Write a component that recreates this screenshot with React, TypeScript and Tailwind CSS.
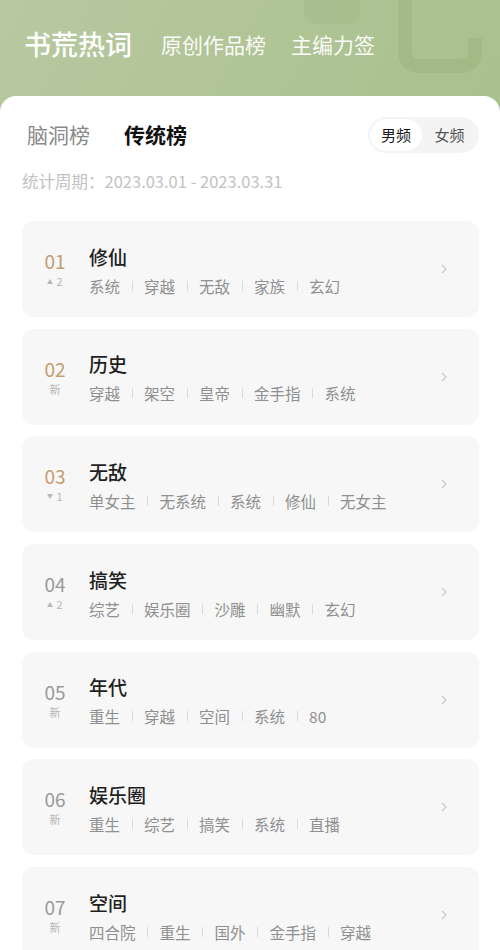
import React from 'react';

type Item = {
  rank: string;
  change: { kind: 'up' | 'down' | 'new'; n?: number };
  title: string;
  tags: string[];
};

const items: Item[] = [
  { rank: '01', change: { kind: 'up', n: 2 }, title: '修仙', tags: ['系统', '穿越', '无敌', '家族', '玄幻'] },
  { rank: '02', change: { kind: 'new' }, title: '历史', tags: ['穿越', '架空', '皇帝', '金手指', '系统'] },
  { rank: '03', change: { kind: 'down', n: 1 }, title: '无敌', tags: ['单女主', '无系统', '系统', '修仙', '无女主'] },
  { rank: '04', change: { kind: 'up', n: 2 }, title: '搞笑', tags: ['综艺', '娱乐圈', '沙雕', '幽默', '玄幻'] },
  { rank: '05', change: { kind: 'new' }, title: '年代', tags: ['重生', '穿越', '空间', '系统', '80'] },
  { rank: '06', change: { kind: 'new' }, title: '娱乐圈', tags: ['重生', '综艺', '搞笑', '系统', '直播'] },
  { rank: '07', change: { kind: 'new' }, title: '空间', tags: ['四合院', '重生', '国外', '金手指', '穿越'] },
];

function Change({ c }: { c: Item['change'] }) {
  if (c.kind === 'new') return <span>新</span>;
  return (
    <span className="flex items-center gap-[3px]">
      <svg width="6" height="5" viewBox="0 0 6 5">
        {c.kind === 'up' ? <path d="M3 0 L6 5 L0 5 Z" fill="#b8b8b8" /> : <path d="M0 0 L6 0 L3 5 Z" fill="#b8b8b8" />}
      </svg>
      <span>{c.n}</span>
    </span>
  );
}

function Row({ item, index }: { item: Item; index: number }) {
  const top = index < 3;
  return (
    <div className="flex items-center h-[96px] rounded-[12px] bg-[#f7f7f7] pl-[12px] pr-[32px]">
      <div className="w-[42px] flex flex-col items-center">
        <span className={`text-[19px] leading-[22px] ${top ? 'text-[#c39d70]' : 'text-[#9a9a9a]'}`}>{item.rank}</span>
        <span className="mt-[2px] text-[11px] leading-[14px] text-[#b5b5b5]">
          <Change c={item.change} />
        </span>
      </div>
      <div className="ml-[13px] flex-1 flex flex-col pt-[2px]">
        <span className="text-[19px] leading-[24px] text-[#1f1f1f] font-medium">{item.title}</span>
        <div className="mt-[7px] flex items-center text-[15.5px] leading-[20px] text-[#8f8f8f]">
          {item.tags.map((t, i) => (
            <React.Fragment key={i}>
              {i > 0 && <span className="mx-[11.5px] w-px h-[10px] bg-[#d9d9d9]" />}
              <span>{t}</span>
            </React.Fragment>
          ))}
        </div>
      </div>
      <svg width="6" height="10" viewBox="0 0 6 10">
        <path d="M1 1 L5 5 L1 9" fill="none" stroke="#c8c8c8" strokeWidth="1.2" />
      </svg>
    </div>
  );
}

export default function App() {
  return (
    <div
      className="w-[500px] h-[950px] overflow-hidden bg-gradient-to-br from-[#b7c9a0] via-[#abc18f] to-[#a6bd88]"
      style={{ fontFamily: '"Noto Sans CJK SC", "Noto Sans", sans-serif' }}
    >
      <div className="relative h-[96px] flex items-center pl-[24px] pb-[8px]">
        <svg className="absolute right-0 top-0" width="200" height="80" viewBox="0 0 200 80">
          <rect x="4" y="-10" width="56" height="34" rx="10" fill="#9cb380" fillOpacity="0.3" />
          <path d="M105 0 L105 52 Q105 66 120 66 L160 66 Q175 66 175 50 L175 38" fill="none" stroke="#9ab27e" strokeOpacity="0.45" strokeWidth="14" strokeLinejoin="round" />
        </svg>
        <span className="relative text-[27px] leading-[34px] font-medium text-white">书荒热词</span>
        <span className="relative ml-[29px] text-[21px] leading-[28px] text-white/95">原创作品榜</span>
        <span className="relative ml-[25px] text-[21px] leading-[28px] text-white/95">主编力签</span>
      </div>
      <div className="bg-white rounded-t-[16px] px-[22px] pr-[21px] pt-[20px] h-full">
        <div className="flex items-center h-[38px]">
          <span className="ml-[5px] text-[21px] text-[#8a8a8a]">脑洞榜</span>
          <span className="ml-[34px] text-[21px] font-bold text-[#111]">传统榜</span>
          <div className="ml-auto flex items-center h-[36px] w-[111px] rounded-full bg-[#f4f4f4] p-[2px]">
            <span className="flex items-center justify-center h-[32px] w-[52px] rounded-full bg-white text-[15px] text-[#1a1a1a]">男频</span>
            <span className="flex-1 text-center text-[15px] text-[#555]">女频</span>
          </div>
        </div>
        <div className="mt-[16px] text-[16.5px] leading-[22px] text-[#c2c2c2]">统计周期：2023.03.01 - 2023.03.31</div>
        <div className="mt-[29px] flex flex-col gap-[11.7px]">
          {items.map((it, i) => (
            <Row key={i} item={it} index={i} />
          ))}
        </div>
      </div>
    </div>
  );
}
